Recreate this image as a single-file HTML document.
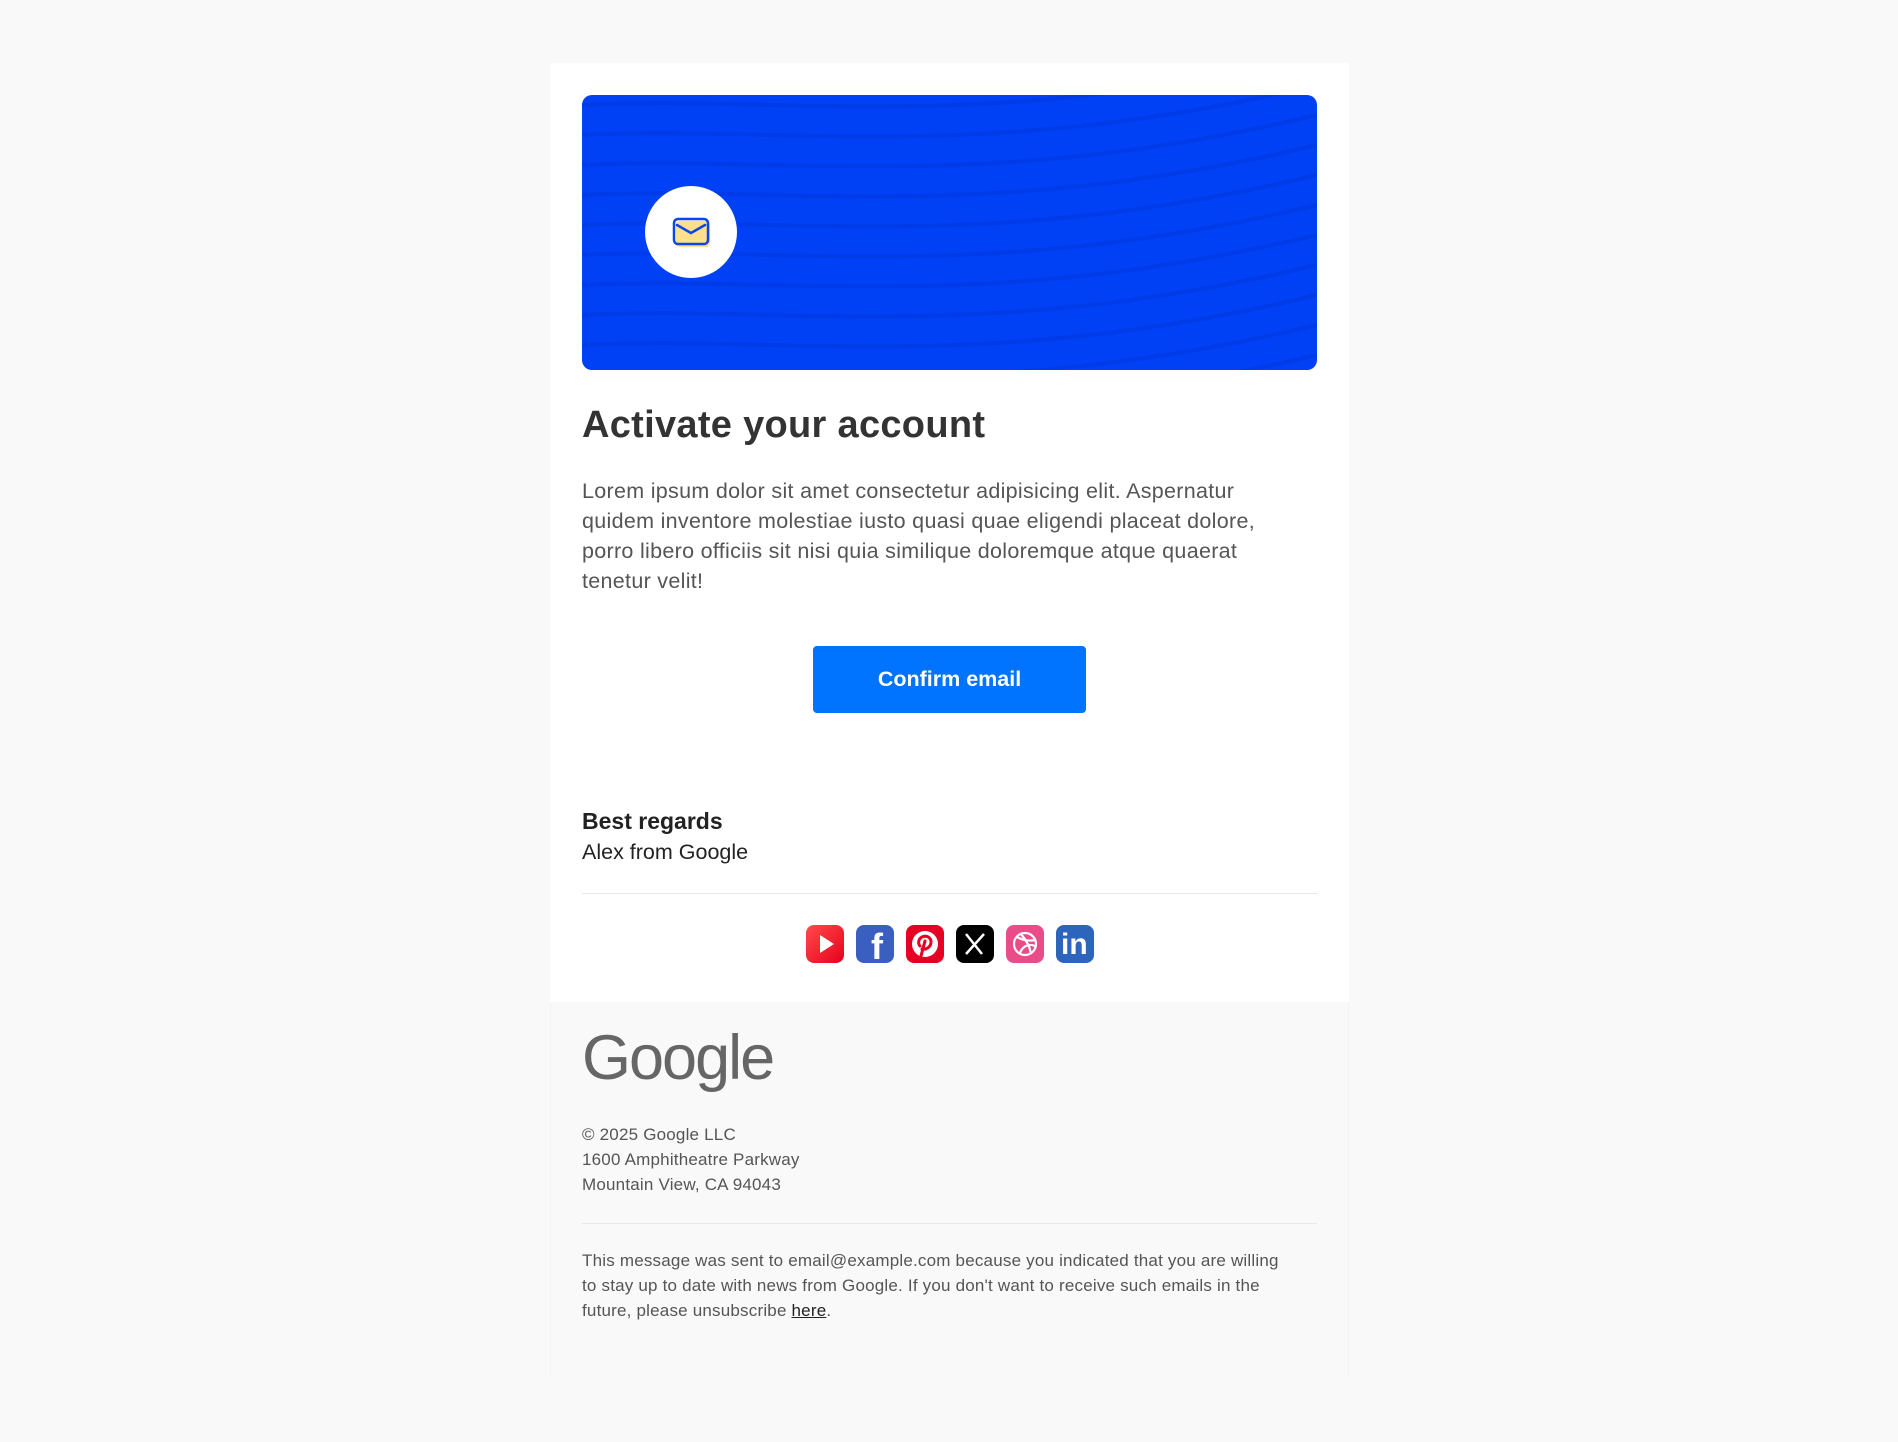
<!DOCTYPE html>
<html><head><meta charset="utf-8"><style>
*{box-sizing:border-box;margin:0;padding:0}
body{width:1898px;height:1442px;background:#f9f9f9;font-family:"Liberation Sans",sans-serif;position:relative;overflow:hidden}
.card{position:absolute;left:550px;top:63px;width:799px;height:939px;background:#fff}
.foot{position:absolute;left:550px;top:1002px;width:799px;height:374px;background:#f9f9f9;border-left:1px solid #f3f3f3;border-right:1px solid #f3f3f3}
.banner{position:absolute;left:582px;top:95px;width:735px;height:275px;border-radius:10px;background:#0041f5;overflow:hidden}
.circle{position:absolute;left:645px;top:186px;width:92px;height:92px;border-radius:50%;background:#fff}
.t{position:absolute;left:582px;white-space:nowrap}
h1{position:absolute;left:582px;top:404px;font-size:38px;font-weight:bold;color:#333;letter-spacing:0.3px}
.p{position:absolute;left:582px;top:476px;width:720px;font-size:21.5px;line-height:30px;color:#555;letter-spacing:0.3px}
.btn{position:absolute;left:813px;top:646px;width:273px;height:67px;background:#0073ff;border-radius:4px;color:#fff;font-weight:bold;font-size:21.5px;text-align:center;line-height:67px}
.hr{position:absolute;left:582px;width:735px;height:1px;background:#e8e8e8}
.ic{position:absolute;top:925px;width:38px;height:38px;border-radius:8px}
.small{font-size:17px;color:#555;line-height:25px;letter-spacing:0.2px}
</style></head><body>
<div class="card"></div>
<div class="foot"></div>
<div class="banner">
<svg width="735" height="275" style="position:absolute;left:0;top:0">
<g fill="none" stroke="#0038e0" stroke-width="4" opacity="0.6">
<path d="M0 10 C200 0 400 40 735 -40"/><path d="M0 40 C200 30 400 70 735 -10"/><path d="M0 70 C200 60 400 100 735 20"/><path d="M0 100 C200 90 400 130 735 50"/><path d="M0 130 C200 120 400 160 735 80"/><path d="M0 160 C200 150 400 190 735 110"/><path d="M0 190 C200 180 400 220 735 140"/><path d="M0 220 C200 210 400 250 735 170"/><path d="M0 250 C200 240 400 280 735 200"/><path d="M0 280 C200 270 400 310 735 230"/><path d="M0 310 C200 300 400 340 735 260"/><path d="M0 340 C200 330 400 370 735 290"/>
</g></svg>
</div>
<div class="circle"></div>
<svg style="position:absolute;left:672px;top:217px" width="40" height="32" viewBox="0 0 40 32">
<rect x="4" y="4" width="34" height="26" rx="4" fill="#ffe08a"/>
<rect x="2" y="2" width="34" height="25" rx="4" fill="none" stroke="#0a47e8" stroke-width="2.5"/>
<path d="M5 8 L19 16 L33 8" fill="none" stroke="#0a47e8" stroke-width="2.5" stroke-linecap="round"/>
</svg>
<h1>Activate your account</h1>
<div class="p">Lorem ipsum dolor sit amet consectetur adipisicing elit. Aspernatur quidem inventore molestiae iusto quasi quae eligendi placeat dolore, porro libero officiis sit nisi quia similique doloremque atque quaerat tenetur velit!</div>
<div class="btn">Confirm email</div>
<div class="t" style="top:808px;font-size:23px;font-weight:bold;color:#222">Best regards</div>
<div class="t" style="top:840px;font-size:21.5px;color:#222">Alex from Google</div>
<div class="hr" style="top:893px"></div>
<div class="ic" style="left:806px;background:linear-gradient(135deg,#ff4b4b,#e8001c)"><svg width="38" height="38"><path d="M14 10 L28 19 L14 28Z" fill="#fff"/></svg></div>
<div class="ic" style="left:856px;background:#3b5fc0"><div style="position:absolute;left:15px;top:3px;color:#fff;font-weight:bold;font-size:36px;line-height:38px">f</div></div>
<div class="ic" style="left:906px;background:#e60023"><svg width="38" height="38"><circle cx="19" cy="19" r="13" fill="#fff"/><path d="M15 31 L19 16 M16 24 C20 25 25 22 25 17 C25 12 20 10 16 12 C12 14 12 19 14 21" stroke="#e60023" stroke-width="3" fill="none" stroke-linecap="round"/></svg></div>
<div class="ic" style="left:956px;background:#000"><svg width="38" height="38"><path d="M10 9 L26 29 M28 9 L10 29" stroke="#fff" stroke-width="2.5"/></svg></div>
<div class="ic" style="left:1006px;background:#ea4c89"><svg width="38" height="38" fill="none" stroke="#fff" stroke-width="2.2"><circle cx="19" cy="19" r="11"/><path d="M11 12 C18 16 25 16 29 15 M14 28 C16 22 22 18 29 21 M15 9 C21 16 24 22 25 29"/></svg></div>
<div class="ic" style="left:1056px;background:#2d64bc"><div style="position:absolute;left:5px;top:1px;color:#fff;font-weight:bold;font-size:30px;line-height:38px">in</div></div>
<div class="t" style="top:1022px;font-size:63px;color:#666;letter-spacing:-2px">Google</div>
<div class="t small" style="top:1122px">© 2025 Google LLC<br>1600 Amphitheatre Parkway<br>Mountain View, CA 94043</div>
<div class="hr" style="top:1223px"></div>
<div class="t small" style="top:1248px;white-space:normal;width:700px">This message was sent to email@example.com because you indicated that you are willing to stay up to date with news from Google. If you don't want to receive such emails in the future, please unsubscribe <u style="color:#222">here</u>.</div>
</body></html>
